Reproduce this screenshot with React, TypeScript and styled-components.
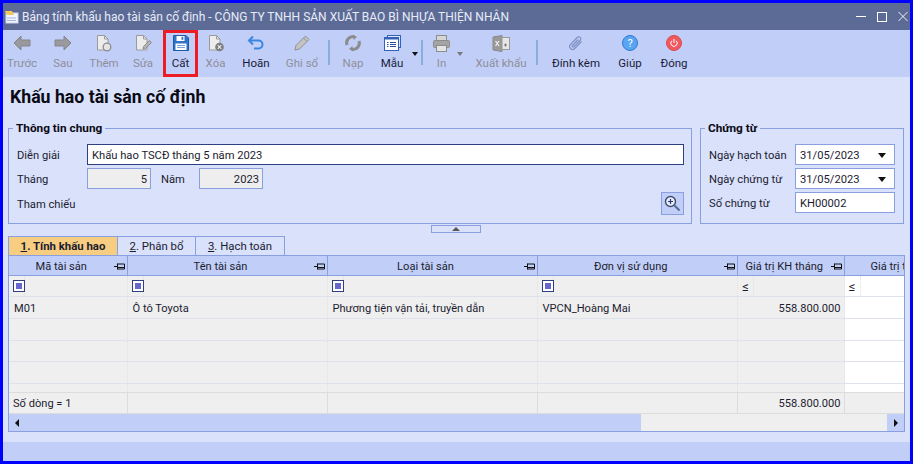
import styled, {createGlobalStyle} from "styled-components";

const GlobalStyle = createGlobalStyle`
  html, body {
    margin: 0;
    padding: 0;
    background: #d9e1fb;
  }
  * {
    box-sizing: border-box;
  }
  body {
    font-family: Roboto, "Open Sans", sans-serif;
    font-size: 11px;
    color: #1c1c30;
  }
`;

const Window = styled.div`
  width: 913px;
  height: 464px;
  border: 3px solid #0000ff;
  display: flex;
  flex-direction: column;
  overflow: hidden;
  background: #d9e1fb;
`;
const TitleBar = styled.div`
  height: 27px;
  flex: none;
  background: #5c6b96;
  color: #e8ecf8;
  display: flex;
  align-items: center;
  padding: 0 2px 0 1px;
  font-size: 12px;
`;
const TitleText = styled.span`
  flex: 1;
  margin-left: 2px;
  white-space: nowrap;
`;
const WinControls = styled.div`
  display: flex;
  gap: 11px;
`;
const WinButton = styled.div`
  width: 10px;
  height: 27px;
  display: flex;
  align-items: center;
  justify-content: center;
`;
const Toolbar = styled.div`
  height: 47px;
  flex: none;
  background: #c1cff8;
  display: flex;
  align-items: stretch;
  font-size: 11.5px;
`;
const ToolButton = styled.div<{$w: number; $off?: boolean; $hot?: boolean}>`
  width: ${(p) => p.$w}px;
  flex: none;
  display: flex;
  flex-direction: column;
  align-items: center;
  justify-content: flex-start;
  padding-top: ${(p) => (p.$hot ? 1 : 4)}px;
  color: ${(p) => (p.$off ? "#8e8e98" : "#1a1a38")};
  border: ${(p) => (p.$hot ? "3px solid #ed1c24" : "none")};
  white-space: nowrap;
`;
const ToolIcon = styled.div`
  height: 18px;
  display: flex;
  align-items: center;
  justify-content: center;
  margin-bottom: 4px;
`;
const Caret = styled.div<{$w: number; $off?: boolean}>`
  width: ${(p) => p.$w}px;
  flex: none;
  display: flex;
  justify-content: center;
  padding-top: 22px;
  &::after {
    content: "";
    width: 0;
    height: 0;
    border-left: 3.5px solid transparent;
    border-right: 3.5px solid transparent;
    border-top: 4px solid ${(p) => (p.$off ? "#77777f" : "#111")};
  }
`;
const ToolSep = styled.div<{$w?: number}>`
  width: ${(p) => p.$w ?? 8}px;
  flex: none;
  display: flex;
  justify-content: center;
  padding: 10px 0 12px;
  &::after {
    content: "";
    width: 2px;
    background: #8aaedc;
  }
`;
const ToolGap = styled.div`
  width: 5px;
  flex: none;
`;
const Content = styled.div`
  flex: 1;
  min-height: 0;
  display: flex;
  flex-direction: column;
  padding: 0 5px;
`;
const Heading = styled.h1`
  margin: 10px 0 0 2px;
  height: 20px;
  line-height: 20px;
  font-size: 17.7px;
  font-weight: 700;
  color: #0a0a14;
`;
const Groups = styled.div`
  display: flex;
  gap: 8px;
  margin-top: 13px;
`;
const Group = styled.fieldset<{$w: number}>`
  width: ${(p) => p.$w}px;
  height: 104px;
  flex: none;
  margin: 0;
  padding: 8px 7px 0 8px;
  border: 1px solid #8a9fe0;
  min-width: 0;
  display: flex;
  flex-direction: column;
  gap: 3px;
`;
const Legend = styled.legend`
  margin-left: -4px;
  padding: 0 3px;
  height: 16px;
  line-height: 16px;
  font-size: 11.8px;
  font-weight: 700;
  color: #0a0a14;
`;
const FormRow = styled.div`
  display: flex;
  align-items: center;
  height: 21px;
  font-size: 11.2px;
`;
const Label = styled.label<{$w: number}>`
  width: ${(p) => p.$w}px;
  flex: none;
  padding-top: 1px;
  white-space: nowrap;
`;
const IndentLabel = styled(Label)`
  padding-left: 10px;
`;
const Field = styled.div<{$w?: number; $tone?: "strong" | "grey"; $right?: boolean}>`
  ${(p) => (p.$w ? `width: ${p.$w}px; flex: none;` : "flex: 1;")}
  height: 21px;
  display: flex;
  align-items: center;
  justify-content: ${(p) => (p.$right ? "flex-end" : "space-between")};
  padding: 1px 3px 0 4px;
  background: ${(p) => (p.$tone === "grey" ? "#eeeeee" : "#fff")};
  border: 1px solid ${(p) => (p.$tone === "strong" ? "#2f4080" : "#8a9fe0")};
`;
const FieldCaret = styled.span`
  width: 0;
  height: 0;
  margin-right: 5px;
  border-left: 4px solid transparent;
  border-right: 4px solid transparent;
  border-top: 5px solid #111;
`;
const LookupRow = styled(FormRow)`
  justify-content: space-between;
  height: 23px;
`;
const LookupButton = styled.div`
  width: 23px;
  height: 23px;
  background: #c1cff8;
  border: 1px solid #8a9fe0;
  display: flex;
  align-items: center;
  justify-content: center;
`;
const Splitter = styled.div`
  width: 50px;
  height: 8px;
  margin: 1px 0 0 423px;
  border: 1px solid #8a9fe0;
  display: flex;
  align-items: center;
  justify-content: center;
  &::after {
    content: "";
    width: 0;
    height: 0;
    border-left: 4px solid transparent;
    border-right: 4px solid transparent;
    border-bottom: 4px solid #555;
  }
`;
const Tabs = styled.div`
  display: flex;
  margin-top: 3px;
  height: 19px;
`;
const Tab = styled.div<{$w: number; $on?: boolean}>`
  width: ${(p) => p.$w}px;
  flex: none;
  display: flex;
  align-items: center;
  justify-content: center;
  background: ${(p) => (p.$on ? "#f7cd82" : "#d9e1fb")};
  font-weight: ${(p) => (p.$on ? 700 : 400)};
  font-size: 11.4px;
  border: 1px solid #8a9fe0;
  border-left: ${(p) => (p.$on ? "1px solid #8a9fe0" : "none")};
  border-bottom: none;
  white-space: pre;
`;
const GridBox = styled.div`
  width: 897px;
  height: 177px;
  border: 1px solid #8a9fe0;
  display: flex;
  flex-direction: column;
  overflow: hidden;
  font-size: 11.1px;
`;
const columns = "118.5px 200px 210px 200.5px 106.500px 123px";
const HeaderRow = styled.div`
  display: grid;
  grid-template-columns: ${columns};
  height: 20px;
  flex: none;
  background: #c1cff8;
  border-bottom: 1px solid #8a9fe0;
`;
const HeaderCell = styled.div`
  display: flex;
  align-items: center;
  padding: 1px 2px 0 0;
  border-right: 1px solid #8a9fe0;
  white-space: nowrap;
  overflow: hidden;
`;
const HeaderText = styled.span`
  flex: 1;
  text-align: center;
`;
const BodyRows = styled.div`
  flex: 1;
  min-height: 0;
  overflow: hidden;
`;
const Row = styled.div<{$h: number}>`
  display: grid;
  grid-template-columns: ${columns};
  height: ${(p) => p.$h}px;
  border-bottom: 1px dotted #e2e2e2;
`;
const Cell = styled.div<{$blank?: boolean; $right?: boolean}>`
  display: flex;
  align-items: center;
  justify-content: ${(p) => (p.$right ? "flex-end" : "flex-start")};
  padding: 2px 3px 0 5px;
  background: ${(p) => (p.$blank ? "#fff" : "#efefef")};
  border-right: 1px dotted #e2e2e2;
  white-space: nowrap;
`;
const FilterCell = styled(Cell)`
  padding: 0;
`;
const FilterSlot = styled.div`
  width: 16px;
  height: 100%;
  padding-left: 4px;
  display: flex;
  align-items: center;
  border-right: 1px dotted #e2e2e2;
  font-size: 13px;
`;
const FilterBox = styled.span`
  width: 12px;
  height: 12px;
  flex: none;
  border: 1px solid #2f3f80;
  background: #fff;
  padding: 2px;
  &::after {
    content: "";
    display: block;
    width: 100%;
    height: 100%;
    background: #6666cc;
  }
`;
const SumRow = styled.div`
  display: grid;
  grid-template-columns: ${columns};
  height: 22px;
  flex: none;
  background: #efefef;
  border-top: 1px solid #dcdcdc;
  border-bottom: 1px solid #dcdcdc;
`;
const SumCell = styled.div<{$right?: boolean}>`
  display: flex;
  align-items: center;
  justify-content: ${(p) => (p.$right ? "flex-end" : "flex-start")};
  padding: 0 3px;
  border-right: 1px solid #dcdcdc;
`;
const SumLabel = styled(SumCell)`
  padding-left: 4px;
`;
const ScrollBar = styled.div`
  height: 17px;
  flex: none;
  display: flex;
  background: #c1cff8;
`;
const ScrollThumb = styled.div`
  width: 632px;
  flex: none;
  display: flex;
  align-items: center;
  padding-left: 6px;
  &::before {
    content: "";
    width: 0;
    height: 0;
    border-top: 4px solid transparent;
    border-bottom: 4px solid transparent;
    border-right: 4px solid #111;
  }
`;
const ScrollTrack = styled.div`
  flex: 1;
  background: #efefef;
`;
const ScrollEnd = styled.div`
  width: 17px;
  flex: none;
  display: flex;
  align-items: center;
  justify-content: center;
  &::before {
    content: "";
    width: 0;
    height: 0;
    border-top: 4px solid transparent;
    border-bottom: 4px solid transparent;
    border-left: 4px solid #111;
  }
`;
const Footer = styled.div`
  height: 19px;
  flex: none;
  background: #c1cff8;
`;

const G = "#9a9a9e";

const ArrowLeft = () => (
  <svg width="18" height="16" viewBox="0 0 18 16">
    <path d="M1 8 8 1v4h9v6H8v4z" fill={G} stroke="#858589" />
  </svg>
);
const ArrowRight = () => (
  <svg width="18" height="16" viewBox="0 0 18 16">
    <path d="M17 8 10 1v4H1v6h9v4z" fill={G} stroke="#858589" />
  </svg>
);
const Doc = ({badge}: {badge?: "add" | "del" | "edit"}) => (
  <svg width="18" height="18" viewBox="0 0 18 18">
    <path d="M2.5 1.5h7l3.5 3.5v11h-10.500z" fill="#ececec" stroke="#9a9a9a" />
    <path d="M9.500 1.500v3.500h3.500" fill="none" stroke="#9a9a9a" />
    {badge === "add" && <circle cx="12" cy="13" r="3.800" fill="#e4e4e4" stroke="#8c8c8c" strokeWidth="1.300" />}
    {badge === "del" && (
      <>
        <circle cx="12.500" cy="13" r="4.300" fill="#7d7d80" />
        <path d="m10.700 11.200 3.600 3.600m0-3.600-3.600 3.600" stroke="#eee" strokeWidth="1.100" />
      </>
    )}
    {badge === "edit" && <path d="m9 15 .5-2.500 6-6 2 2-6 6z" fill="#b4b4b4" stroke="#8c8c8c" />}
  </svg>
);
const Floppy = () => (
  <svg width="16" height="16" viewBox="0 0 16 16">
    <path d="M.5.5h12.500l2.500 2.500v12.500H.5z" fill="#2f72c6" stroke="#1f5aa8" />
    <rect x="3.500" y="1" width="8" height="5" fill="#fff" />
    <rect x="8.500" y="1.800" width="1.800" height="3" fill="#2f72c6" />
    <rect x="2.500" y="8.500" width="11" height="6.500" fill="#fff" />
    <path d="M4 10.500h8M4 12.500h8" stroke="#7aa4dc" />
  </svg>
);
const Undo = () => (
  <svg width="18" height="16" viewBox="0 0 18 16">
    <path d="M6 1.500 2 5.500l4 4" fill="none" stroke="#3a86e0" strokeWidth="2" />
    <path d="M2.500 5.500h9a3.800 3.800 0 0 1 0 8H7" fill="none" stroke="#3a86e0" strokeWidth="2" />
  </svg>
);
const Pencil = () => (
  <svg width="18" height="18" viewBox="0 0 18 18">
    <path d="m2 16 1-4.500L12.500 2l3.500 3.500L6.500 15z" fill="#c4c4c4" stroke="#909090" />
    <path d="m10.500 4 3.500 3.500" stroke="#909090" />
  </svg>
);
const Refresh = () => (
  <svg width="18" height="18" viewBox="0 0 18 18">
    <path d="M3 11a6.500 6.500 0 0 1 7-8.500" fill="none" stroke="#8c8c8c" strokeWidth="3" />
    <path d="M9 .5 13 3 9.500 6z" fill="#8c8c8c" />
    <path d="M15 7a6.500 6.500 0 0 1-7 8.500" fill="none" stroke="#8c8c8c" strokeWidth="3" />
    <path d="M9 17.500 5 15l3.500-3z" fill="#8c8c8c" />
  </svg>
);
const Template = () => (
  <svg width="17" height="16" viewBox="0 0 17 16">
    <rect x="3.500" y=".5" width="13" height="12" fill="#dfe7fb" stroke="#3360b8" />
    <rect x=".5" y="2.500" width="14" height="13" fill="#fff" stroke="#3360b8" />
    <rect x=".5" y="2.500" width="14" height="2" fill="#3360b8" />
    <path d="M3 7.500h1.500M6 7.500h6M3 9.500h1.500M6 9.500h6M3 11.500h1.500M6 11.500h6" stroke="#2a4f9c" />
  </svg>
);
const Printer = () => (
  <svg width="17" height="17" viewBox="0 0 17 17">
    <rect x="3.500" y=".5" width="10" height="5" fill="#d6d6d6" stroke="#8c8c8c" />
    <rect x=".5" y="5.500" width="16" height="7" rx="1" fill="#a4a4a4" stroke="#8c8c8c" />
    <rect x="3.500" y="10.500" width="10" height="6" fill="#e4e4e4" stroke="#8c8c8c" />
  </svg>
);
const Excel = () => (
  <svg width="18" height="17" viewBox="0 0 18 17">
    <path d="M10 .5 1 2v13l9 1.500z" fill="#9a9a9a" stroke="#8a8a8a" />
    <rect x="10" y="2.500" width="7.500" height="12" fill="#e6e6e6" stroke="#9a9a9a" />
    <path d="m3.500 6 3.500 5m0-5-3.500 5" stroke="#f0f0f0" strokeWidth="1.200" />
    <path d="M12 10h3m-1.500-1.500v3" stroke="#777" />
  </svg>
);
const Clip = () => (
  <svg width="16" height="17" viewBox="0 0 16 17">
    <path
      d="m13.500 6.500-6.800 7a2.900 2.900 0 0 1-4.200-4l7-7.200a2 2 0 0 1 2.900 2.700l-6.600 6.800a.9.9 0 0 1-1.300-1.300l5.800-6"
      fill="none"
      stroke="#7f8fc4"
      strokeWidth="1.200"
    />
  </svg>
);
const Help = () => (
  <svg width="16" height="16" viewBox="0 0 16 16">
    <circle cx="8" cy="8" r="7.500" fill="#5aa5f2" stroke="#2f78d0" />
    <text x="8" y="12" fontSize="11" textAnchor="middle" fill="#fff" fontFamily="Roboto, sans-serif">
      ?
    </text>
  </svg>
);
const Power = () => (
  <svg width="16" height="16" viewBox="0 0 16 16">
    <circle cx="8" cy="8" r="7.500" fill="#f05a5f" stroke="#d84a50" />
    <path d="M5.800 5.800a3.200 3.200 0 1 0 4.400 0M8 4v4" fill="none" stroke="#fff" />
  </svg>
);
const AppIcon = () => (
  <svg width="16" height="14" viewBox="0 0 16 14">
    <rect x="2" y="3" width="12" height="10" fill="#f4f6fb" stroke="#c8d4ee" />
    <path d="M1 1h7l2 4H3z" fill="#f2c75c" />
    <path d="M3 8h9M3 10.500h9" stroke="#9db4e0" />
  </svg>
);
const Zoomer = () => (
  <svg width="17" height="17" viewBox="0 0 17 17">
    <circle cx="6.500" cy="6.500" r="5" fill="#e8eefc" stroke="#3d4c6e" strokeWidth="1.400" />
    <path d="M4 6.500h5M6.500 4v5" stroke="#2a3a70" strokeWidth="1.200" />
    <path d="m10.500 10.500 5 5" stroke="#5a6c98" strokeWidth="2.200" />
  </svg>
);
const Pin = () => (
  <svg width="11" height="9" viewBox="0 0 11 9">
    <path d="M0 4.500h3M3.500 1.500v6M3.500 2h7M3.500 7h7M10.500 2v5M3.500 5.500h7" fill="none" stroke="#111" />
  </svg>
);

const tools = [
  {label: "Trước", w: 38, off: true, icon: <ArrowLeft />},
  {label: "Sau", w: 44, off: true, icon: <ArrowRight />},
  {label: "Thêm", w: 38, off: true, icon: <Doc badge="add" />},
  {label: "Sửa", w: 40, off: true, icon: <Doc badge="edit" />},
  {label: "Cất", w: 35, hot: true, icon: <Floppy />},
  {label: "Xóa", w: 35, off: true, icon: <Doc badge="del" />},
  {label: "Hoãn", w: 46, icon: <Undo />},
  {label: "Ghi sổ", w: 46, off: true, icon: <Pencil />},
];

const headers = ["Mã tài sản", "Tên tài sản", "Loại tài sản", "Đơn vị sử dụng", "Giá trị KH tháng", "Giá trị tính KH"];

function App() {
  return (
    <>
      <GlobalStyle />
      <Window>
        <TitleBar>
          <AppIcon />
          <TitleText>Bảng tính khấu hao tài sản cố định - CÔNG TY TNHH SẢN XUẤT BAO BÌ NHỰA THIỆN NHÂN</TitleText>
          <WinControls>
            <WinButton>
              <svg width="10" height="10" viewBox="0 0 10 10">
                <path d="M0 4.500h10" stroke="#fff" />
              </svg>
            </WinButton>
            <WinButton>
              <svg width="10" height="10" viewBox="0 0 10 10">
                <rect x=".5" y=".5" width="9" height="9" fill="none" stroke="#fff" />
              </svg>
            </WinButton>
            <WinButton>
              <svg width="11" height="11" viewBox="0 0 11 11">
                <path d="m.5.5 10 10m0-10-10 10" stroke="#fff" />
              </svg>
            </WinButton>
          </WinControls>
        </TitleBar>
        <Toolbar>
          {tools.map((t) => (
            <ToolButton key={t.label} $w={t.w} $off={t.off} $hot={t.hot}>
              <ToolIcon>{t.icon}</ToolIcon>
              {t.label}
            </ToolButton>
          ))}
          <ToolSep />
          <ToolButton $w={40} $off>
            <ToolIcon>
              <Refresh />
            </ToolIcon>
            Nạp
          </ToolButton>
          <ToolButton $w={38}>
            <ToolIcon>
              <Template />
            </ToolIcon>
            Mẫu
          </ToolButton>
          <Caret $w={7} />
          <ToolSep />
          <ToolButton $w={31} $off>
            <ToolIcon>
              <Printer />
            </ToolIcon>
            In
          </ToolButton>
          <Caret $w={5} $off />
          <ToolGap />
          <ToolButton $w={68} $off>
            <ToolIcon>
              <Excel />
            </ToolIcon>
            Xuất khẩu
          </ToolButton>
          <ToolSep $w={4} />
          <ToolButton $w={74}>
            <ToolIcon>
              <Clip />
            </ToolIcon>
            Đính kèm
          </ToolButton>
          <ToolButton $w={34}>
            <ToolIcon>
              <Help />
            </ToolIcon>
            Giúp
          </ToolButton>
          <ToolButton $w={54}>
            <ToolIcon>
              <Power />
            </ToolIcon>
            Đóng
          </ToolButton>
        </Toolbar>
        <Content>
          <Heading>Khấu hao tài sản cố định</Heading>
          <Groups>
            <Group $w={684}>
              <Legend>Thông tin chung</Legend>
              <FormRow>
                <Label $w={70}>Diễn giải</Label>
                <Field $tone="strong">Khấu hao TSCĐ tháng 5 năm 2023</Field>
              </FormRow>
              <FormRow>
                <Label $w={70}>Tháng</Label>
                <Field $w={64} $tone="grey" $right>
                  5
                </Field>
                <IndentLabel $w={48}>Năm</IndentLabel>
                <Field $w={64} $tone="grey" $right>
                  2023
                </Field>
              </FormRow>
              <LookupRow>
                <Label $w={70}>Tham chiếu</Label>
                <LookupButton>
                  <Zoomer />
                </LookupButton>
              </LookupRow>
            </Group>
            <Group $w={204}>
              <Legend>Chứng từ</Legend>
              <FormRow>
                <Label $w={86}>Ngày hạch toán</Label>
                <Field $w={100}>
                  31/05/2023
                  <FieldCaret />
                </Field>
              </FormRow>
              <FormRow>
                <Label $w={86}>Ngày chứng từ</Label>
                <Field $w={100}>
                  31/05/2023
                  <FieldCaret />
                </Field>
              </FormRow>
              <FormRow>
                <Label $w={86}>Số chứng từ</Label>
                <Field $w={100}>KH00002</Field>
              </FormRow>
            </Group>
          </Groups>
          <Splitter />
          <Tabs>
            <Tab $w={110} $on>
              <span>
                <u>1</u>. Tính khấu hao
              </span>
            </Tab>
            <Tab $w={78}>
              <span>
                <u>2</u>. Phân bổ
              </span>
            </Tab>
            <Tab $w={89}>
              <span>
                <u>3</u>. Hạch toán
              </span>
            </Tab>
          </Tabs>
          <GridBox>
            <HeaderRow>
              {headers.map((h, i) => (
                <HeaderCell key={h}>
                  <HeaderText>{h}</HeaderText>
                  {i < 5 && <Pin />}
                </HeaderCell>
              ))}
            </HeaderRow>
            <BodyRows>
              <Row $h={21}>
                {[0, 1, 2, 3].map((i) => (
                  <FilterCell key={i}>
                    <FilterSlot>
                      <FilterBox />
                    </FilterSlot>
                  </FilterCell>
                ))}
                <FilterCell>
                  <FilterSlot>≤</FilterSlot>
                </FilterCell>
                <FilterCell $blank>
                  <FilterSlot>≤</FilterSlot>
                </FilterCell>
              </Row>
              <Row $h={22}>
                <Cell>M01</Cell>
                <Cell>Ô tô Toyota</Cell>
                <Cell>Phương tiện vận tải, truyền dẫn</Cell>
                <Cell>VPCN_Hoàng Mai</Cell>
                <Cell $right>558.800.000</Cell>
                <Cell $blank />
              </Row>
              {[0, 1, 2, 3].map((r) => (
                <Row $h={21.5} key={r}>
                  {[0, 1, 2, 3, 4].map((c) => (
                    <Cell key={c} />
                  ))}
                  <Cell $blank />
                </Row>
              ))}
            </BodyRows>
            <SumRow>
              <SumLabel>Số dòng = 1</SumLabel>
              <SumCell />
              <SumCell />
              <SumCell />
              <SumCell $right>558.800.000</SumCell>
              <SumCell />
            </SumRow>
            <ScrollBar>
              <ScrollThumb />
              <ScrollTrack />
              <ScrollEnd />
            </ScrollBar>
          </GridBox>
        </Content>
        <Footer />
      </Window>
    </>
  );
}

export default App;
